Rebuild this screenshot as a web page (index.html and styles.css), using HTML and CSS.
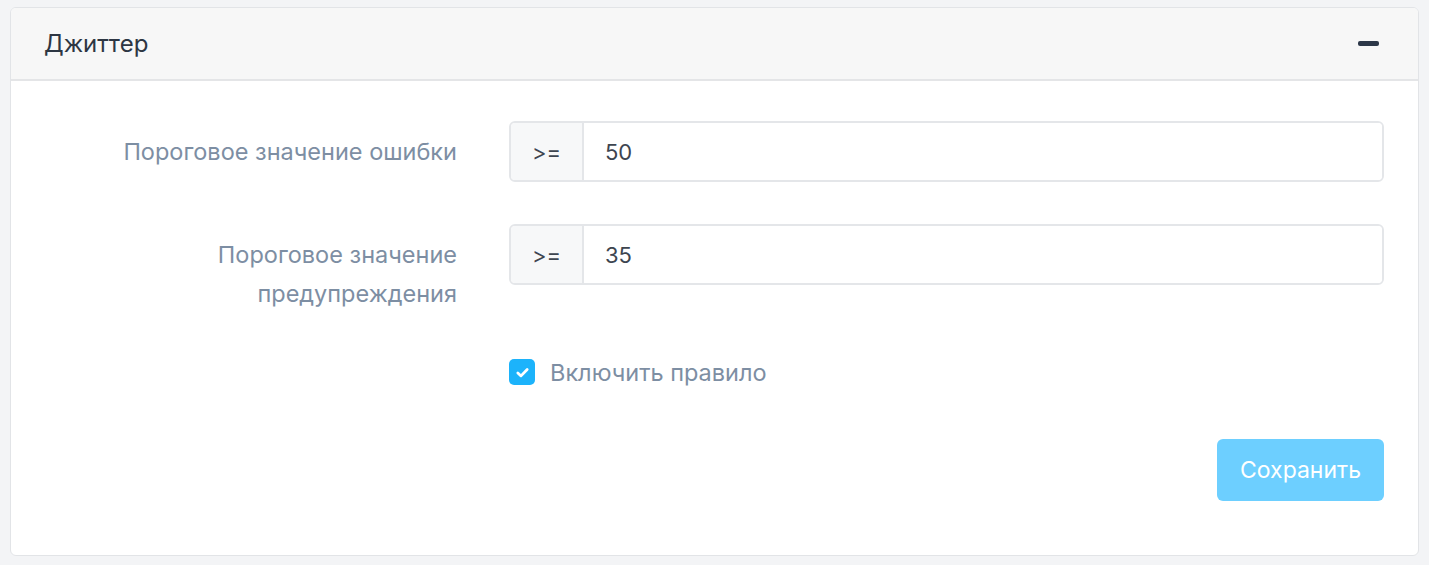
FILE: index.html
```html
<!DOCTYPE html>
<html lang="ru">
  <head>
    <meta charset="UTF-8" />
    <meta name="viewport" content="width=device-width, initial-scale=1.0" />
    <title>Джиттер</title>
    <link rel="stylesheet" href="styles.css">
  </head>
  <body>
    <div class="card">
      <div class="card-header">
        <h2>Джиттер</h2>
        <button class="collapse-btn" aria-label="Свернуть"><span></span></button>
      </div>

      <form class="card-body">
        <div class="form-row">
          <label for="error_threshold">Пороговое значение ошибки</label>
          <div class="input-group">
            <span class="addon">&gt;=</span>
            <input type="text" id="error_threshold" value="50" />
          </div>
        </div>

        <div class="form-row">
          <label for="warn_threshold">Пороговое значение предупреждения</label>
          <div class="input-group">
            <span class="addon">&gt;=</span>
            <input type="text" id="warn_threshold" value="35" />
          </div>
        </div>

        <div class="form-row check-row">
          <div></div>
          <label class="check">
            <span class="box">
              <svg viewBox="0 0 16 16" width="17" height="17">
                <path d="M3.6 8.4 L6.6 11.2 L12.4 5.2" fill="none" stroke="#fff" stroke-width="2.6" stroke-linecap="round" stroke-linejoin="round" />
              </svg>
            </span>
            Включить правило
          </label>
        </div>

        <div class="actions">
          <button type="submit" class="save">Сохранить</button>
        </div>
      </form>
    </div>
  </body>
</html>
```

FILE: styles.css
```css
body {
  font-family: Inter, "Liberation Sans", Arial, sans-serif;
  background-color: #f3f4f6;
  color: #2d3643;
  margin: 0;
  padding: 7px 10px 0 10px;
}

.card {
  background-color: #fff;
  border: 1px solid #e2e4e7;
  border-radius: 6px;
  height: 549px;
  box-sizing: border-box;
  overflow: hidden;
}

/* Header */
.card-header {
  background-color: #f7f7f7;
  border-bottom: 2px solid #e4e5e7;
  height: 73px;
  box-sizing: border-box;
  display: flex;
  align-items: center;
  justify-content: space-between;
  padding: 0 39px 0 33px;
}

.card-header h2 {
  margin: 0;
  font-size: 24px;
  font-weight: normal;
  color: #2d3643;
}

.collapse-btn {
  background: transparent;
  border: none;
  padding: 0;
  width: 21px;
  height: 21px;
  display: flex;
  align-items: center;
  cursor: pointer;
}

.collapse-btn span {
  display: block;
  width: 21px;
  height: 5px;
  border-radius: 2px;
  background-color: #2c3748;
}

/* Body */
.card-body {
  padding: 40px 34px 0 34px;
}

.form-row {
  display: grid;
  grid-template-columns: 412px 1fr;
  column-gap: 52px;
  margin-bottom: 42px;
}

.form-row > label {
  text-align: right;
  font-size: 23.5px;
  line-height: 39px;
  padding-top: 11px;
  color: #7d8ea3;
}

.input-group {
  display: flex;
  height: 61px;
  border: 2px solid #e4e6e9;
  border-radius: 6px;
  box-sizing: border-box;
  overflow: hidden;
}

.addon {
  width: 71px;
  background-color: #f7f8f9;
  border-right: 2px solid #e4e6e9;
  display: flex;
  align-items: center;
  justify-content: center;
  font-size: 22px;
  color: #3d4550;
}

.input-group input {
  flex: 1;
  border: none;
  outline: none;
  padding: 0 21px;
  font-family: inherit;
  font-size: 22px;
  color: #3d4550;
}

.check-row {
  margin-top: -10px;
  margin-bottom: 51px;
}

.check {
  display: flex;
  align-items: center;
  gap: 15px;
  height: 32px;
  font-size: 24px;
  color: #7d8ea3;
  cursor: pointer;
}

.box {
  width: 26px;
  height: 26px;
  border-radius: 5px;
  background-color: #1cb3fb;
  display: flex;
  align-items: center;
  justify-content: center;
}

.actions {
  display: flex;
  justify-content: flex-end;
}

.save {
  width: 167px;
  height: 62px;
  background-color: #6dcfff;
  color: #fff;
  border: none;
  border-radius: 6px;
  font-family: inherit;
  font-size: 23px;
  cursor: pointer;
}
```
